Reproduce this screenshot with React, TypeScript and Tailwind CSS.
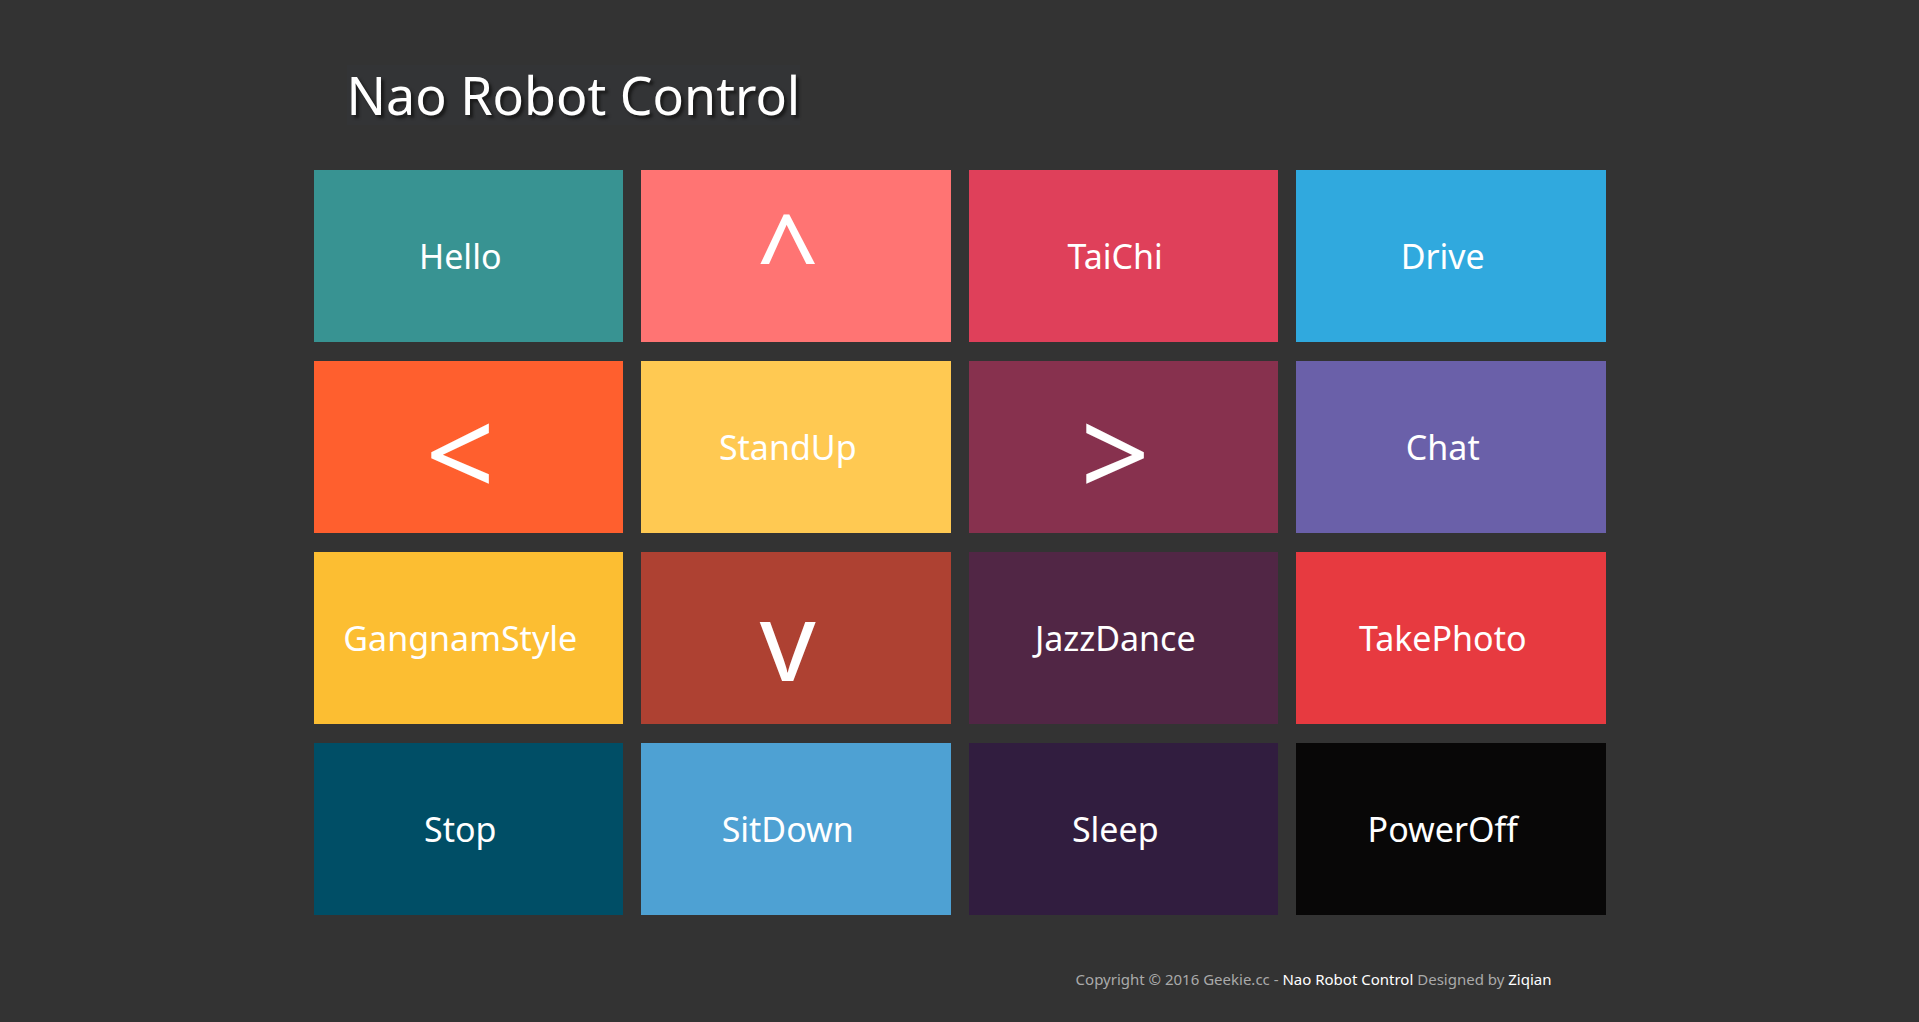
type Tile = { label: string; color: string; arrow?: string };

const tiles: Tile[] = [
  { label: "Hello", color: "bg-[#389392]" },
  { label: "^", color: "bg-[#ff7473]", arrow: "pb-3 text-[110px]" },
  { label: "TaiChi", color: "bg-[#df405a]" },
  { label: "Drive", color: "bg-[#30a9de]" },
  { label: "<", color: "bg-[#ff5f2e]", arrow: "pt-2 text-[122px]" },
  { label: "StandUp", color: "bg-[#ffc952]" },
  { label: ">", color: "bg-[#87314e]", arrow: "pt-2 text-[122px]" },
  { label: "Chat", color: "bg-[#6a60a9]" },
  { label: "GangnamStyle", color: "bg-[#fcbe32]" },
  { label: "v", color: "bg-[#ae4132]", arrow: "text-[110px]" },
  { label: "JazzDance", color: "bg-[#512645]" },
  { label: "TakePhoto", color: "bg-[#e73a40]" },
  { label: "Stop", color: "bg-[#004e66]" },
  { label: "SitDown", color: "bg-[#4ea1d3]" },
  { label: "Sleep", color: "bg-[#311d3f]" },
  { label: "PowerOff", color: "bg-[#080707]" },
];

function ControlTile({ label, color, arrow }: Tile) {
  const size = arrow ? `leading-[110px] ${arrow}` : "text-[34px] leading-[44px]";
  return (
    <button
      type="button"
      className={`flex aspect-[9/5] items-center justify-center pr-4 text-white ${size} ${color}`}
    >
      {label}
    </button>
  );
}

export default function App() {
  return (
    <div className="min-h-screen bg-[#333333] font-['Noto_Sans',sans-serif]">
      <div className="mx-auto w-full max-w-[1292px]">
        <header className="px-[33px] pt-[65px] pb-[45px]">
          <h1 className="inline-block bg-[#333436] align-top text-[52px] leading-[60px] text-white [text-shadow:3px_3px_3px_#1a1a1a]">
            Nao Robot Control
          </h1>
        </header>
        <main className="grid grid-cols-4 gap-x-[18px] gap-y-[19px]">
          {tiles.map((tile) => (
            <ControlTile key={tile.label} {...tile} />
          ))}
        </main>
        <footer className="pt-[52px] pr-[54px] text-right text-[15px] leading-6 text-[#aaaaaa]">
          Copyright © 2016 Geekie.cc -{" "}
          <a href="#control" className="text-white">
            Nao Robot Control
          </a>{" "}
          Designed by{" "}
          <a href="#author" className="text-white">
            Ziqian
          </a>
        </footer>
      </div>
    </div>
  );
}
